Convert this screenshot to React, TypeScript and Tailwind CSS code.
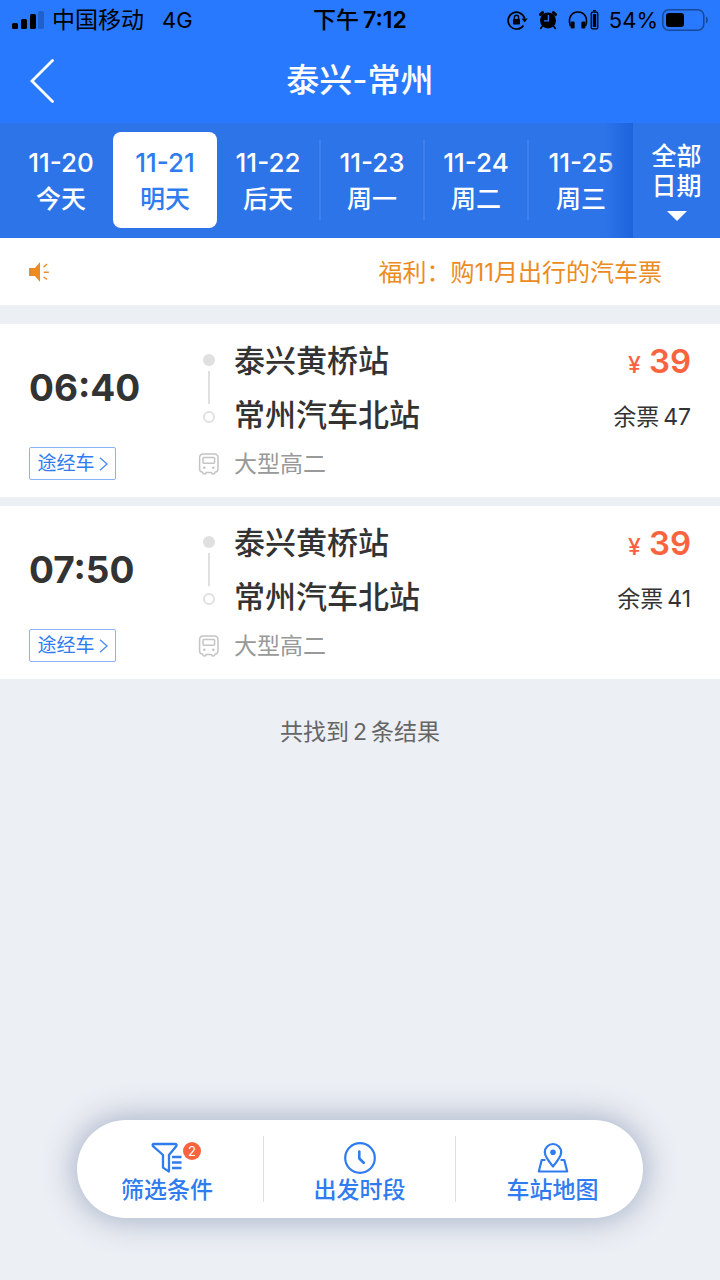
const days = [
  { date: "11-20", label: "今天" },
  { date: "11-21", label: "明天" },
  { date: "11-22", label: "后天" },
  { date: "11-23", label: "周一" },
  { date: "11-24", label: "周二" },
  { date: "11-25", label: "周三" },
];

const trips = [
  { time: "06:40", from: "泰兴黄桥站", to: "常州汽车北站", bus: "大型高二", price: 39, left: 47 },
  { time: "07:50", from: "泰兴黄桥站", to: "常州汽车北站", bus: "大型高二", price: 39, left: 41 },
];

function SignalIcon() {
  return (
    <svg width="32" height="18" viewBox="0 0 32 18" fill="#000">
      <rect x="0" y="12" width="6" height="6" rx="1.5" />
      <rect x="9" y="8" width="6" height="10" rx="1.5" />
      <rect x="18" y="3" width="6" height="15" rx="1.5" />
      <rect x="26" y="0" width="6" height="18" rx="1.5" opacity="0.2" />
    </svg>
  );
}

function RotationLockIcon() {
  return (
    <svg width="21" height="20" viewBox="0 0 21 20" fill="none" stroke="#000" strokeWidth="1.7">
      <path d="M16.4 15.4A8.4 8.4 0 1 1 17.6 8.5" />
      <path d="M14.6 8.4h6l-3 4.2z" fill="#000" stroke="none" />
      <rect x="6" y="9" width="7" height="5.6" rx="0.8" fill="#000" stroke="none" />
      <path d="M7.4 9.4V7.4a2.1 2.1 0 0 1 4.2 0v2" strokeWidth="1.4" />
    </svg>
  );
}

function AlarmIcon() {
  return (
    <svg width="20" height="20" viewBox="0 0 20 20">
      <circle cx="10" cy="10.4" r="8" fill="#000" />
      <path d="M2.4 4.6L4.6 2.6M17.6 4.6L15.4 2.6" stroke="#000" strokeWidth="3" strokeLinecap="round" />
      <path d="M4.6 16L2.8 18.2M15.4 16l1.8 2.2" stroke="#000" strokeWidth="1.8" strokeLinecap="round" />
      <path d="M10.4 5v5.8H6" fill="none" stroke="#2979ff" strokeWidth="1.3" />
    </svg>
  );
}

function HeadphonesIcon() {
  return (
    <svg width="31" height="20" viewBox="0 0 31 20" fill="none">
      <path d="M2.4 16C-.4 8 3.4 2 10 2s10.400 6 7.600 14" stroke="#000" strokeWidth="1.6" />
      <rect x="2.6" y="11.4" width="4" height="7" rx="1.2" fill="#000" />
      <rect x="13.4" y="11.4" width="4" height="7" rx="1.2" fill="#000" />
      <path d="M25 .8h3" stroke="#000" strokeWidth="1.4" />
      <rect x="23.2" y="2.2" width="6.6" height="16.6" rx="1.4" stroke="#000" strokeWidth="1.2" />
      <rect x="24.8" y="4" width="3.4" height="13" fill="#000" />
    </svg>
  );
}

function BatteryIcon() {
  return (
    <svg width="46" height="22" viewBox="0 0 46 22" fill="none">
      <rect x="0.8" y="0.8" width="41" height="20.4" rx="6" stroke="#000" strokeOpacity="0.4" strokeWidth="1.6" />
      <rect x="4" y="4" width="18" height="14" rx="3" fill="#000" />
      <path d="M44 7.5c2.4 1 2.4 6 0 7z" fill="#000" fillOpacity="0.4" />
    </svg>
  );
}

function SpeakerIcon() {
  return (
    <svg width="20" height="20" viewBox="0 0 20 20" fill="#ec8b22">
      <path d="M0 6h6l5-6v20l-5-6H0z" />
      <path d="M14.600 5.200L18 2M14.800 10.300h5M14.600 15l3.400 2.400" stroke="#ec8b22" strokeWidth="1.4" />
    </svg>
  );
}

function BusIcon() {
  return (
    <svg width="22" height="22" viewBox="0 0 22 22" fill="none" stroke="#c4c4c4" strokeWidth="1.5">
      <path d="M4.6 19.2C2.400 19 1.600 17.800 1.600 16V4.800C1.600 2 3 .9 5.400.9h10.800c2.400 0 3.800 1.100 3.800 3.900V16c0 1.800-.8 3-3 3.200-.2 2.200-2.800 2.400-3.600.4H8.200c-.8 2-3.400 1.800-3.600-.4z" />
      <rect x="5" y="4.4" width="11.6" height="5.8" rx="1" />
      <circle cx="6.3" cy="14.8" r="1.3" fill="#c4c4c4" stroke="none" />
      <circle cx="15.3" cy="14.8" r="1.3" fill="#c4c4c4" stroke="none" />
    </svg>
  );
}

function FilterIcon() {
  return (
    <svg width="32" height="32" viewBox="0 0 32 32" fill="none" stroke="#2f7bf0" strokeWidth="2.3" strokeLinecap="round" strokeLinejoin="round">
      <path d="M3 2h21c1.600 0 2 1.200 1.200 2.200L18 13v16.600l-6-4V13L2 4.200C1.200 3 1.600 2 3 2z" />
      <path d="M21 15h9.500M21 20.500h9.500M21 26h9.500" strokeLinecap="butt" />
    </svg>
  );
}

function ClockIcon() {
  return (
    <svg className="shrink-0" width="32" height="32" viewBox="0 0 32 32" fill="none" stroke="#2f7bf0" strokeLinecap="round" strokeLinejoin="round">
      <circle cx="16" cy="16" r="14.8" strokeWidth="2.2" />
      <path d="M15.3 9.500v7l4.400 4.300" strokeWidth="2.6" />
    </svg>
  );
}

function MapIcon() {
  return (
    <svg className="shrink-0" width="32" height="32" viewBox="0 0 32 32" fill="none" stroke="#2f7bf0" strokeWidth="2.2" strokeLinecap="round" strokeLinejoin="round">
      <path d="M16 24.500C11.500 19 7.800 14.600 7.800 10.200a8.200 8.200 0 0 1 16.400 0c0 4.400-3.700 8.800-8.200 14.300z" />
      <circle cx="16" cy="10.200" r="2.800" fill="#2f7bf0" stroke="none" />
      <path d="M7.600 18H4.700L1.800 29.500h28.400L27.300 18h-2.900" />
    </svg>
  );
}

function StatusBar() {
  return (
    <div className="grid h-10 grid-cols-[1fr_auto_1fr] items-center px-3 text-[22px] leading-none text-black">
      <div className="flex items-center gap-2">
        <SignalIcon />
        <span className="text-[23px]">中国移动</span>
        <span className="ml-2.5">4G</span>
      </div>
      <div className="flex gap-1 text-[23px]">
        <span className="font-medium">下午</span>
        <span className="font-semibold">7:12</span>
      </div>
      <div className="flex items-center justify-end gap-2.5">
        <RotationLockIcon />
        <AlarmIcon />
        <HeadphonesIcon />
        <div className="flex items-center gap-1">
          <span>54%</span>
          <BatteryIcon />
        </div>
      </div>
    </div>
  );
}

function DateStrip() {
  return (
    <nav className="flex h-[115px] bg-[#2d74e9] text-[25px] font-medium text-white">
      <div className="relative flex flex-1 pt-[9px] pb-2.5 pl-[9px]">
        {days.map((d, i) => (
          <button
            key={d.date}
            className={
              i === 1
                ? "flex flex-1 flex-col items-center justify-center rounded-lg bg-white text-[#2f7bf0]"
                : "flex flex-1 flex-col items-center justify-center"
            }
          >
            <span
              className={
                i > 1 && i < 5
                  ? "flex h-20 w-full flex-col items-center border-r-2 border-[#3f80ee] pt-1"
                  : "flex h-20 w-full flex-col items-center pt-1"
              }
            >
              <span className="text-[26px] leading-[37px]">{d.date}</span>
              <span className="leading-[37px]">{d.label}</span>
            </span>
          </button>
        ))}
        <div className="pointer-events-none absolute inset-y-0 right-0 w-7 bg-linear-to-r from-[#1d63dc]/0 to-[#1d63dc]" />
      </div>
      <button className="flex w-[87px] flex-col items-center pt-[18px]">
        <span className="leading-[30px]">全部</span>
        <span className="leading-[30px]">日期</span>
        <svg className="mt-2.5" width="20" height="10" viewBox="0 0 20 10" fill="#fff">
          <path d="M0 0h20L10 10z" />
        </svg>
      </button>
    </nav>
  );
}

function TripCard({ trip }: { trip: (typeof trips)[number] }) {
  return (
    <article className="flex bg-white px-[29px] text-[#333]">
      <div className="flex w-[169px] flex-col items-start pt-[37px]">
        <span className="text-[37px] leading-[54px] font-bold">{trip.time}</span>
        <button className="mt-8 flex h-[33px] w-[87px] items-center justify-center gap-1 rounded-xs border border-[#8ab2f5] text-[19px] text-[#2f7bf0]">
          <span className="pt-0.5">途经车</span>
          <svg width="9" height="14" viewBox="0 0 9 14" fill="none" stroke="#4f8df2" strokeWidth="1.4">
            <path d="M1 .8l7 6.200-7 6.200" />
          </svg>
        </button>
      </div>

      <div className="flex w-[22px] flex-col items-center pt-[30px]">
        <span className="size-3 rounded-full bg-[#e0e0e0]" />
        <span className="mt-[5px] h-[33px] w-0.5 bg-[#e0e0e0]" />
        <span className="mt-[7px] size-3 rounded-full border-2 border-[#e0e0e0]" />
        <span className="mt-[30px]">
          <BusIcon />
        </span>
      </div>

      <div className="flex-1 pt-2.5 pb-[11px] pl-3.5">
        <p className="text-[31px] leading-[54px] font-medium">{trip.from}</p>
        <p className="text-[31px] leading-[54px] font-medium">{trip.to}</p>
        <p className="text-[23px] leading-11 text-[#999]">{trip.bus}</p>
      </div>

      <div className="flex flex-col items-end pt-2.5">
        <p className="flex items-baseline gap-2 leading-[54px] font-semibold text-[#f9643f]">
          <span className="text-[23px] font-medium">¥</span>
          <span className="text-[33px]">{trip.price}</span>
        </p>
        <p className="flex gap-1 text-[23px] leading-[50px]">
          <span>余票</span>
          <span>{trip.left}</span>
        </p>
      </div>
    </article>
  );
}

export default function App() {
  return (
    <div className="flex min-h-screen flex-col bg-[#eceff4] font-['Inter','Noto_Sans_CJK_SC',sans-serif]">
      <header className="bg-[#2979ff]">
        <StatusBar />
        <div className="grid h-[83px] grid-cols-[1fr_auto_1fr] items-center px-[29px] pb-0.5 text-white">
          <button aria-label="返回">
            <svg width="26" height="44" viewBox="0 0 26 44" fill="none" stroke="#fff" strokeWidth="2.8" strokeLinecap="round">
              <path d="M23.500 1.500L3 22l20.500 20.500" />
            </svg>
          </button>
          <h1 className="text-[33px] font-medium">泰兴-常州</h1>
        </div>
      </header>

      <DateStrip />

      <div className="flex h-[67px] items-center justify-between bg-white pr-[58px] pl-[29px]">
        <SpeakerIcon />
        <p className="pt-0.5 text-2xl text-[#ec8b22]">福利：购11月出行的汽车票</p>
      </div>

      <main className="mt-[19px] flex flex-col gap-[9px]">
        {trips.map((t) => (
          <TripCard key={t.time} trip={t} />
        ))}
      </main>

      <p className="mt-9 text-center text-[23px] leading-[34px] text-[#666]">
        共找到<span className="mx-1">{trips.length}</span>条结果
      </p>

      {/* Floating tools */}
      <div className="mx-[77px] mt-auto mb-[62px] grid h-[98px] grid-cols-[1fr_192px_1fr] items-center rounded-full bg-white text-[23px] leading-8 font-medium text-[#2f7bf0] shadow-[0_0_30px_4px_rgba(90,110,150,0.45)]">
        <button className="flex h-[66px] flex-col items-center border-r border-[#e0e0e0] pt-1.5 pr-1.5">
          <span className="relative">
            <FilterIcon />
            <span className="absolute top-0 left-8 flex size-[18px] items-center justify-center rounded-full bg-[#f9643f] text-[13px] font-normal text-white">
              2
            </span>
          </span>
          筛选条件
        </button>
        <button className="flex h-[66px] flex-col items-center border-r border-[#e0e0e0] pt-1.5">
          <ClockIcon />
          出发时段
        </button>
        <button className="flex h-[66px] flex-col items-center pt-1.5 pl-1.5">
          <MapIcon />
          车站地图
        </button>
      </div>
    </div>
  );
}
